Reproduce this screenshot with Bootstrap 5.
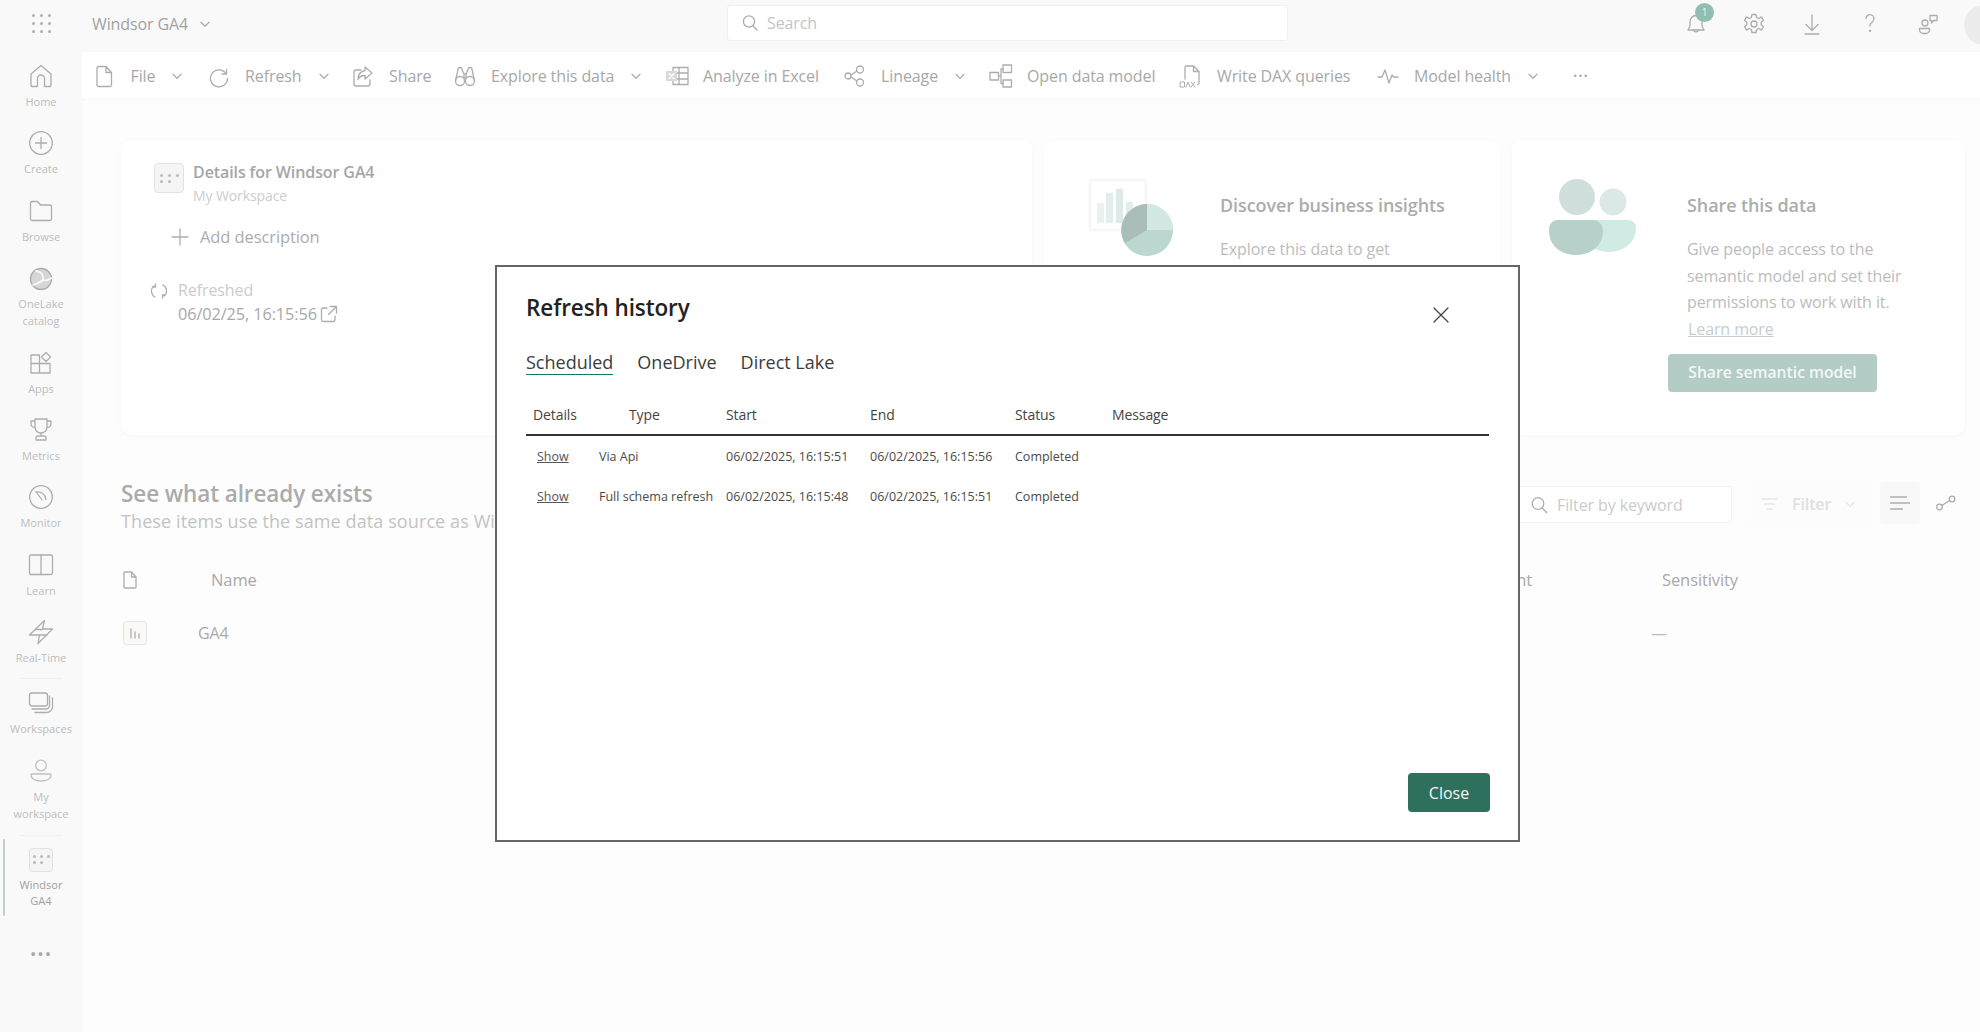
<!DOCTYPE html>
<html lang="en"><head><meta charset="utf-8"><title>Windsor GA4</title>
<link href="https://cdn.jsdelivr.net/npm/bootstrap@5.3.0/dist/css/bootstrap.min.css" rel="stylesheet">
<style>
html,body{height:100%}
body{font-family:"Open Sans","Liberation Sans",sans-serif;background:#fdfdfd;color:#aaa;font-size:16px;letter-spacing:-.1px}
svg.ic{fill:none;stroke:#adadad;stroke-width:1.3;stroke-linecap:round;stroke-linejoin:round;display:block;flex:none}
.top-strip{display:grid;grid-template-columns:82px 645px 561px 1fr;height:52px;background:#f9f9f9;overflow:hidden}
.top-cell{padding-bottom:5px}
.waffle{width:22px;height:22px;display:grid;grid-template-columns:repeat(3,3px);gap:5px;justify-content:center;align-content:center}
.waffle i{width:3px;height:3px;border-radius:50%;background:#b0b0b0}
.app-name{font-size:16px;color:#a2a2a2;padding-left:10px;gap:11px}
.search-box{height:36px;margin-top:5px;background:#fff;border:1px solid #f1f1f1;border-radius:3px;padding-left:13px;gap:8px;color:#c4c4c4;font-size:16px}
.top-icons{gap:34px}
.bell-wrap{position:relative}
.bell-count{position:absolute;left:11px;top:-9px;width:19px;height:19px;border-radius:50%;background:#92bdb2;color:#e9f4f1;font-size:10px;line-height:19px;text-align:center}
.avatar-disc{width:40px;height:40px;border-radius:50%;background:#ececec;margin-left:-10px;margin-right:-24px;margin-top:2px}
.side-rail{width:82px;flex:none;background:#f9f9f9;box-shadow:1px 0 3px rgba(0,0,0,.015)}
.rail-item{height:67.3px;padding-top:11px;display:flex;flex-direction:column;align-items:center;font-size:11px;line-height:17px;color:#bdbdbd;text-align:center;letter-spacing:0}
.rail-item svg{margin-bottom:4px}
.rail-two{height:85px}
.rail-sep{height:4px;margin:0 20px;border-bottom:1px solid #f0f0f0}
.rail-active{position:relative;color:#9f9f9f;height:82px;padding-top:12px}
.rail-active .thumb{width:24px;height:24px;gap:3px 4px;margin-bottom:5px}
.rail-active span{line-height:16.5px}
.rail-active::before{content:"";position:absolute;left:3px;top:3px;width:2px;height:77px;background:#c3cdcb;border-radius:1px}
.rail-more{color:#a8a8a8;font-size:17px;line-height:20px;text-align:center;letter-spacing:1px;margin-top:26px}
.work-col{min-width:0;position:relative}
.tool-row{height:48px;background:#fff;border-bottom:1px solid #f5f5f5;padding-left:10px;font-size:16px;color:#a8a8a8}
.tool-btn{display:flex;align-items:center;flex:none}
.tool-btn>svg:first-child{margin-right:14.5px}
.tool-btn .chev{margin-left:16px}
.tw1{width:114.5px}.tw2{width:144px}.tw3{width:102px}.tw4{width:212px}.tw5{width:178px}.tw6{width:146px}.tw7{width:190px}.tw8{width:197px}.tw9{width:193px}
.tool-more{font-size:20px;line-height:20px;padding-left:4px;letter-spacing:0}
.page-body{padding:40px 14px 0 39px}
.tile-grid{display:grid;grid-template-columns:911px 456px 453px;column-gap:12px}
.tile{height:295px;background:#fff;border:0;border-radius:10px;box-shadow:0 1px 4px rgba(0,0,0,.03)}
.tile-main{padding:23px 0 0 33px}
.tile-ill{padding:35px 0 0 41px;gap:45px;display:flex;flex-direction:row}
.tile-ill.share-tile{padding-left:35px;gap:48px}
.thumb{width:30px;height:30px;background:#f5f5f5;border:1px solid #e2e2e2;border-radius:4px;flex:none;display:grid;grid-template-columns:repeat(3,3px);gap:3px 5px;justify-content:center;align-content:center}
.thumb i{width:3px;height:3px;border-radius:50%;background:#bbb}
.detail-head{gap:9px}
.detail-title{font-size:16px;font-weight:600;line-height:22px;margin-top:-2px;color:#a6a6a6}
.detail-sub{font-size:14px;line-height:20px;margin-top:3px;color:#cdcdcd}
.add-row{margin:19px 0 0 17px;line-height:24px;font-weight:500;gap:11px;color:#acacac;font-size:16.5px}
.fresh-row{margin:29px 0 0 -3px;line-height:24px;gap:11px}
.fresh-lbl{color:#cbcbcb}
.fresh-date{color:#a8a8a8;gap:3px;font-size:16.3px}
.tile-h{font-size:18px;font-weight:600;line-height:26px;margin-top:17px;color:#acacac}
.tile-p{font-size:16px;line-height:26.5px;margin-top:18px;color:#bcbcbc;width:240px}
.tile-p a{color:#c2d0cd;display:inline-block;margin-left:1px}
.share-cta{display:block;width:209px;height:38px;padding:0;margin:12px 0 0 -19px;background:#b3ccc6;color:#f1f8f6;border:0;border-radius:4px;font-size:15.7px;font-weight:600}
.exists-head{margin-top:44px}
.exists-title{font-size:22.5px;font-weight:600;line-height:30px;color:#ababab;margin:0}
.exists-sub{font-size:18px;line-height:24px;color:#c3c3c3;letter-spacing:.1px;white-space:nowrap}
.exists-tools{margin-top:3px;gap:0}
.kw-box{width:222px;height:37px;margin-top:4px;background:#fff;border:1px solid #f3f3f3;border-radius:2px;padding-left:19px;gap:9px;font-size:16px;color:#cbcbcb}
.kw-btn{width:127px;height:43px;margin-left:13px;background:#fcfcfc;border-radius:3px;padding-left:14px;gap:13px;color:#e0e0e0;font-size:16px;font-weight:600}
.kw-btn svg.ic{stroke:#e8e8e8}
.list-btn{width:40px;height:42px;margin-left:8px;background:#f8f8f8;border-radius:4px;justify-content:center}
.link-btn{width:24px;height:42px;margin:0 7px 0 15px}
.grid-head{height:40px;margin-top:27px;font-weight:500;color:#a9a9a9;font-size:16.5px}
.grid-data{height:40px;margin-top:13px;color:#aaa}
.col-name-h{margin-left:72px}
.col-name-d{margin-left:51px}
.col-end{margin-right:130px}
.col-sens{width:304px}
.col-dash{width:315px;color:#bdbdbd}
.ga-thumb{width:24px;height:24px;margin-left:2px;border:1px solid #e6e6e6;border-radius:3px;background:#fbf9f6}
.history-dlg{position:fixed;left:495px;top:265px;width:1025px;height:577px;border:2px solid #666;border-radius:0;background:#fff;padding:25px 28px 28px 29px;color:#2b2b2b;letter-spacing:0;box-shadow:none}
.dlg-title{font-size:22.5px;font-weight:600;line-height:32px;margin:0;color:#222;letter-spacing:-.1px}
.dlg-x{position:absolute;right:69px;top:40px;padding:0;background:none;border:0}
.dlg-tabs{margin-top:25px;gap:24px;font-size:18px;line-height:26px}
.dlg-tabs a{color:#3c3c3c;text-decoration:none}
.dlg-tabs a.active{border-bottom:1px solid #117865;height:26px}
.run-table{table-layout:fixed;width:963px;margin:22px 0 0;font-size:13px;--bs-table-bg:transparent}
.run-table th{height:38px;padding:0 7px 2px;font-weight:400;font-size:14px;vertical-align:middle;color:#444;border-bottom:2px solid #333;letter-spacing:-.1px}
.run-table th.th-type{padding-left:37px}
.run-table td{height:40px;padding:4px 7px 0;vertical-align:middle;color:#4a4a4a;white-space:nowrap;font-size:12.5px}
.run-table td.td-show{padding-left:11px}
.run-table a{color:#555}
.dlg-foot{margin-top:auto}
.dlg-close{width:82px;height:39px;padding:0;background:#2f6f5e;border:0;border-radius:4px;color:#f3f8f6;font-size:16px;font-weight:500}
.dlg-close:hover{background:#2f6f5e;color:#fff}
.c1{width:66px}.c2{width:127px}.c3{width:144px}.c4{width:145px}.c5{width:97px}.flex-none{flex:none}
.body-row{height:980px}
.svg-defs{position:absolute}
</style></head>
<body class="overflow-hidden">
<svg width="0" height="0" class="svg-defs"><defs>
<symbol id="chev" viewBox="0 0 12 12"><path d="M2 4.2 6 8.2 10 4.2"/></symbol>
</defs></svg>
<header class="top-strip">
 <div class="d-flex align-items-center justify-content-center top-cell"><div class="waffle"><i></i><i></i><i></i><i></i><i></i><i></i><i></i><i></i><i></i></div></div>
 <div class="d-flex align-items-center app-name top-cell"><span>Windsor GA4</span><svg class="ic" width="12" height="12"><use href="#chev"/></svg></div>
 <div class="search-box d-flex align-items-center"><svg class="ic" width="18" height="18" viewBox="0 0 18 18"><circle cx="8" cy="7.5" r="5.6"/><path d="M12 11.8 16 16"/></svg><span>Search</span></div>
 <div class="d-flex align-items-center justify-content-end top-icons top-cell">
  <div class="bell-wrap"><svg class="ic" width="24" height="24" viewBox="0 0 24 24"><path d="M12 3.5a6 6 0 0 0-6 6v4.5L4 18h16l-2-4V9.5a6 6 0 0 0-6-6Z"/><path d="M9.5 18a2.6 2.6 0 0 0 5 0"/></svg><span class="bell-count">1</span></div>
  <svg class="ic" width="24" height="24" viewBox="0 0 24 24"><circle cx="12" cy="12" r="3"/><path d="M10 2.5h4l.6 3 2.3 1 2.6-1.6 2 3.4-2.300 2v2.400l2.300 2-2 3.400-2.600-1.600-2.300 1-.6 3h-4l-.6-3-2.300-1-2.600 1.600-2-3.400 2.300-2v-2.400l-2.300-2 2-3.400 2.600 1.600 2.300-1Z"/></svg>
  <svg class="ic" width="24" height="24" viewBox="0 0 24 24"><path d="M12 3v15M6 12.500l6 6 6-6M5 22h14"/></svg>
  <svg class="ic" width="24" height="24" viewBox="0 0 24 24"><path d="M8 6.500a4 4 0 1 1 6.500 3.200c-1.500 1.200-2.500 2-2.500 4.300"/><circle cx="12" cy="19" r=".5"/></svg>
  <svg class="ic" width="24" height="24" viewBox="0 0 24 24"><circle cx="9" cy="11" r="3"/><path d="M3.500 16.500h10v1.500a4 4 0 0 1-4 3.500h-2a4 4 0 0 1-4-3.500Z"/><path d="M14 3.500h7v5h-3.500L15.500 11V8.500H14Z"/></svg>
  <div class="avatar-disc"></div>
 </div>
</header>
<div class="d-flex body-row">
<nav class="side-rail">
 <div class="rail-item"><svg class="ic" width="26" height="26" viewBox="0 0 26 26"><path d="M13 2.500 3 11v11.500a1 1 0 0 0 1 1h5.500V15.500a3.500 3.500 0 0 1 7 0v8H22a1 1 0 0 0 1-1V11Z"/></svg>Home</div>
 <div class="rail-item"><svg class="ic" width="26" height="26" viewBox="0 0 26 26"><circle cx="13" cy="13" r="11.300"/><path d="M13 7.500v11M7.500 13h11"/></svg>Create</div>
 <div class="rail-item"><svg class="ic" width="26" height="26" viewBox="0 0 26 26"><path d="M2.500 21V5a1.500 1.500 0 0 1 1.500-1.500h5.500L12.500 7H22a1.500 1.500 0 0 1 1.500 1.500V21a1.500 1.500 0 0 1-1.500 1.500H4A1.500 1.500 0 0 1 2.500 21Z"/></svg>Browse</div>
 <div class="rail-item rail-two"><svg class="ic" width="26" height="26" viewBox="0 0 26 26"><circle cx="13" cy="14" r="10.500" fill="#d6d6d6"/><path d="M8 6c5 .5 8 4 7 9 3.500 1 6 0 8-2M5 20c5-2 8-3 10-5" stroke="#f9f9f9" stroke-width="1.800"/></svg>OneLake<br>catalog</div>
 <div class="rail-item"><svg class="ic" width="26" height="26" viewBox="0 0 26 26"><path d="M3 5h8.500v8.500H3ZM3 13.500h8.500V23H3ZM11.500 13.500H22V23H11.500ZM18 2.500l4.500 4.500-4.500 4.500L13.500 7Z"/></svg>Apps</div>
 <div class="rail-item"><svg class="ic" width="26" height="26" viewBox="0 0 26 26"><path d="M7 3h12v8a6 6 0 0 1-12 0ZM7 5H3v3a4 4 0 0 0 4 3.500M19 5h4v3a4 4 0 0 1-4 3.500M13 17v3M8 24v-2a2 2 0 0 1 2-2h6a2 2 0 0 1 2 2v2Z" transform="translate(0 -1)"/></svg>Metrics</div>
 <div class="rail-item"><svg class="ic" width="26" height="26" viewBox="0 0 26 26"><circle cx="13" cy="13" r="11.300"/><path d="M8 7.500l6 8.500M8 8c5-1 9 2 10 7.500"/></svg>Monitor</div>
 <div class="rail-item"><svg class="ic" width="26" height="26" viewBox="0 0 26 26"><rect x="1.500" y="3" width="23" height="19.500" rx="1.500"/><path d="M13 3v19.500"/></svg>Learn</div>
 <div class="rail-item"><svg class="ic" width="26" height="26" viewBox="0 0 26 26"><path d="M16.500 1.500 14.500 10H24.500L10 24.500 11.500 16H1.500Z"/><path d="M7 10.500h7.500M11.500 16H19"/></svg>Real-Time</div>
 <div class="rail-sep"></div>
 <div class="rail-item"><svg class="ic" width="26" height="26" viewBox="0 0 26 26"><rect x="1.500" y="3" width="18" height="13" rx="2.500"/><path d="M4 19h14a3.500 3.500 0 0 0 3.500-3.500V6M7 22.500h11.500a6 6 0 0 0 6-6V8"/></svg>Workspaces</div>
 <div class="rail-item rail-two"><svg class="ic" width="26" height="26" viewBox="0 0 26 26" stroke-opacity=".75"><circle cx="13" cy="7.500" r="5.300"/><path d="M4 16h18a1 1 0 0 1 1 1c0 4-4.500 6-10 6S3 21 3 17a1 1 0 0 1 1-1Z"/></svg>My<br>workspace</div>
 <div class="rail-sep"></div>
 <div class="rail-item rail-two rail-active"><div class="thumb"><i></i><i></i><i></i><i></i><i></i></div><span>Windsor<br>GA4</span></div>
 <div class="rail-more">•••</div>
</nav>
<div class="work-col flex-grow-1">
 <div class="tool-row d-flex align-items-center">
  <div class="tool-btn tw1"><svg class="ic" width="24" height="24" viewBox="0 0 24 24"><path d="M5 4a1.500 1.500 0 0 1 1.500-1.500H14l5.500 6V21a1.500 1.500 0 0 1-1.500 1.500H6.500A1.500 1.500 0 0 1 5 21ZM14 2.500V8.500h5.500"/></svg><span>File</span><svg class="ic chev" width="12" height="12"><use href="#chev"/></svg></div>
  <div class="tool-btn tw2"><svg class="ic" width="24" height="24" viewBox="0 0 24 24"><path d="M19.500 5.500V10h-4.500M19 9.500a8.500 8.500 0 1 0 1.500 5"/></svg><span>Refresh</span><svg class="ic chev" width="12" height="12"><use href="#chev"/></svg></div>
  <div class="tool-btn tw3"><svg class="ic" width="24" height="24" viewBox="0 0 24 24"><path d="M10 6H5a2 2 0 0 0-2 2v12a2 2 0 0 0 2 2h12a2 2 0 0 0 2-2v-4M14 3l7 6-7 6v-3.500c-4 0-6 1.500-7 4 0-5 2.500-8 7-9Z"/></svg><span>Share</span></div>
  <div class="tool-btn tw4"><svg class="ic" width="24" height="24" viewBox="0 0 24 24"><circle cx="7" cy="17" r="4.500"/><circle cx="17" cy="17" r="4.500"/><path d="M2.500 17 5 5.500a2 2 0 0 1 4 0L11 10v4h2v-4l2-4.500a2 2 0 0 1 4 0L21.500 17M11 10h2"/></svg><span>Explore this data</span><svg class="ic chev" width="12" height="12"><use href="#chev"/></svg></div>
  <div class="tool-btn tw5"><svg class="ic" width="24" height="24" viewBox="0 0 24 24"><path d="M8 3.500h15v17H8ZM14 3.500v17M8 9h15M8 15h15"/><rect x="1" y="7" width="11" height="10" fill="#d8d8d8" stroke="none"/><path d="M4 9.500l5 5M9 9.500l-5 5" stroke="#fff"/></svg><span>Analyze in Excel</span></div>
  <div class="tool-btn tw6"><svg class="ic" width="24" height="24" viewBox="0 0 24 24"><circle cx="5" cy="12" r="3"/><circle cx="17" cy="5.500" r="3.500"/><circle cx="17" cy="18.500" r="3.500"/><path d="M8 11l6-4M8 13l6 4"/></svg><span>Lineage</span><svg class="ic chev" width="12" height="12"><use href="#chev"/></svg></div>
  <div class="tool-btn tw7"><svg class="ic" width="24" height="24" viewBox="0 0 24 24"><rect x="14" y="1" width="8.500" height="7.500"/><rect x="1" y="8.500" width="8.500" height="7.500"/><rect x="14" y="16" width="8.500" height="7"/><path d="M9.500 12H12V5h2M12 12v7.500h2"/></svg><span>Open data model</span></div>
  <div class="tool-btn tw8"><svg class="ic" width="24" height="24" viewBox="0 0 24 24"><path d="M6 15V3.500a1.500 1.500 0 0 1 1.500-1.500h7L20 7.500V19a1.500 1.500 0 0 1-1 1.500M14.500 2v5.500H20"/><path d="M1.500 18h4v5h-4ZM7 23l2-5 2 5M12 18l4 5M16 18l-4 5" stroke-width="1"/></svg><span>Write DAX queries</span></div>
  <div class="tool-btn tw9"><svg class="ic" width="24" height="24" viewBox="0 0 24 24"><path d="M2 13h4l3-7 4 13 3-8 1.500 2H22"/></svg><span>Model health</span><svg class="ic chev" width="12" height="12"><use href="#chev"/></svg></div>
  <div class="tool-btn tool-more">···</div>
 </div>
 <main class="page-body">
  <div class="tile-grid">
   <section class="card tile tile-main">
    <div class="d-flex detail-head"><div class="thumb"><i></i><i></i><i></i><i></i><i></i></div><div><div class="detail-title">Details for Windsor GA4</div><div class="detail-sub">My Workspace</div></div></div>
    <div class="add-row d-flex align-items-center"><svg class="ic" width="18" height="18" viewBox="0 0 18 18"><path d="M9 1v16M1 9h16"/></svg><span>Add description</span></div>
    <div class="fresh-row d-flex">
     <svg class="ic mt-1" width="16" height="18" viewBox="0 0 16 18"><path d="M3 4a6.500 6.500 0 0 0 1 11M13 14a6.500 6.500 0 0 0-1-11M4.500 2v3h-3M11.500 16v-3h3"/></svg>
     <div><div class="fresh-lbl">Refreshed</div><div class="fresh-date d-flex align-items-center"><span>06/02/25, 16:15:56</span><svg class="ic" width="18" height="18" viewBox="0 0 18 18"><path d="M7 3H3a1.500 1.500 0 0 0-1.500 1.500V15A1.500 1.500 0 0 0 3 16.500h10.500A1.500 1.500 0 0 0 15 15v-4M10 1.500h6.500V8M16.500 1.500 8.500 9.500"/></svg></div></div>
    </div>
   </section>
   <section class="card tile tile-ill">
    <svg width="90" height="86" viewBox="0 0 90 86" class="flex-none"><rect x="5" y="5" width="56" height="50" rx="2" fill="#fff" stroke="#f7f7f7" stroke-width="3"/><rect x="12" y="28" width="7" height="20" fill="#eaf2f0"/><rect x="21" y="18" width="7" height="30" fill="#e2eeeb"/><rect x="31" y="14" width="7" height="34" fill="#dcebe7"/><rect x="41" y="27" width="7" height="21" fill="#e4efec"/><ellipse cx="62" cy="55" rx="26" ry="26" fill="#bcd6d0"/><path d="M62 55V29a26 26 0 0 1 26 26Z" fill="#d3e8e3"/><path d="M62 55V29a26 26 0 0 0-22 39Z" fill="#abbdba"/></svg>
    <div><div class="tile-h">Discover business insights</div><div class="tile-p">Explore this data to get</div></div>
   </section>
   <section class="card tile tile-ill share-tile">
    <svg width="92" height="86" viewBox="0 0 92 86" class="flex-none"><circle cx="30" cy="22" r="18" fill="#d0dfdb"/><circle cx="66" cy="27" r="13.500" fill="#dce8e5"/><path d="M34 45h47a8 8 0 0 1 8 8c0 14-12 24-27 24s-28-10-28-24Z" fill="#d0eae4"/><path d="M10 45h36a10 10 0 0 1 10 10c0 16-12 25-27 25S2 71 2 55a9 9 0 0 1 8-10Z" fill="#b7d0ca"/></svg>
    <div><div class="tile-h">Share this data</div><div class="tile-p">Give people access to the semantic model and set their permissions to work with it. <a href="#">Learn more</a></div><button type="button" class="btn share-cta">Share semantic model</button></div>
   </section>
  </div>
  <div class="exists-head d-flex justify-content-between align-items-start">
   <div><h2 class="exists-title">See what already exists</h2><div class="exists-sub">These items use the same data source as Windsor GA4.</div></div>
   <div class="exists-tools d-flex align-items-start">
    <div class="kw-box d-flex align-items-center"><svg class="ic" width="18" height="18" viewBox="0 0 18 18"><circle cx="8" cy="7.500" r="5.800"/><path d="M12 11.800 16.500 16.500"/></svg><span>Filter by keyword</span></div>
    <div class="kw-btn d-flex align-items-center"><svg class="ic" width="20" height="16" viewBox="0 0 20 16"><path d="M3 3h15M5.500 8h10M8 13h5"/></svg><span>Filter</span><svg class="ic" width="12" height="12"><use href="#chev"/></svg></div>
    <div class="list-btn d-flex align-items-center"><svg class="ic" width="22" height="18" viewBox="0 0 22 18"><path d="M1.500 3h16M1.500 9h19M1.500 15h12"/></svg></div>
    <div class="link-btn d-flex align-items-center"><svg class="ic" width="22" height="18" viewBox="0 0 22 18"><circle cx="4.500" cy="13" r="2.800"/><circle cx="17" cy="5" r="2.800"/><path d="M7 11.500l7.500-5"/></svg></div>
   </div>
  </div>
  <div class="grid-head d-flex align-items-center"><svg class="ic" width="18" height="20" viewBox="0 0 18 20"><path d="M3 3a1 1 0 0 1 1-1h6.500L15 7v10a1 1 0 0 1-1 1H4a1 1 0 0 1-1-1ZM10.500 2v5H15"/></svg><span class="col-name-h">Name</span><span class="ms-auto col-end">Endorsement</span><span class="col-sens">Sensitivity</span></div>
  <div class="grid-data d-flex align-items-center"><div class="ga-thumb d-flex align-items-center justify-content-center"><svg class="ic" width="16" height="16" viewBox="0 0 16 16"><path d="M4 4v9M8 7v6M12 9v4"/></svg></div><span class="col-name-d">GA4</span><span class="ms-auto col-dash">—</span></div>
 </main>
</div>
</div>
<div class="modal-content history-dlg d-flex flex-column" role="dialog">
 <h1 class="dlg-title">Refresh history</h1>
 <button type="button" class="dlg-x" aria-label="Close"><svg class="ic" width="16" height="16" viewBox="0 0 16 16"><path d="M1 1l14 14M15 1 1 15" stroke="#444"/></svg></button>
 <div class="dlg-tabs d-flex"><a class="active" href="#">Scheduled</a><a href="#">OneDrive</a><a href="#">Direct Lake</a></div>
 <table class="table table-borderless run-table">
  <colgroup><col class="c1"><col class="c2"><col class="c3"><col class="c4"><col class="c5"><col></colgroup>
  <thead><tr><th>Details</th><th class="th-type">Type</th><th>Start</th><th>End</th><th>Status</th><th>Message</th></tr></thead>
  <tbody>
   <tr><td class="td-show"><a href="#">Show</a></td><td>Via Api</td><td>06/02/2025, 16:15:51</td><td>06/02/2025, 16:15:56</td><td>Completed</td><td></td></tr>
   <tr><td class="td-show"><a href="#">Show</a></td><td>Full schema refresh</td><td>06/02/2025, 16:15:48</td><td>06/02/2025, 16:15:51</td><td>Completed</td><td></td></tr>
  </tbody>
 </table>
 <div class="dlg-foot d-flex justify-content-end"><button type="button" class="btn dlg-close">Close</button></div>
</div>
<script src="https://cdn.jsdelivr.net/npm/bootstrap@5.3.0/dist/js/bootstrap.bundle.min.js"></script>
</body></html>
